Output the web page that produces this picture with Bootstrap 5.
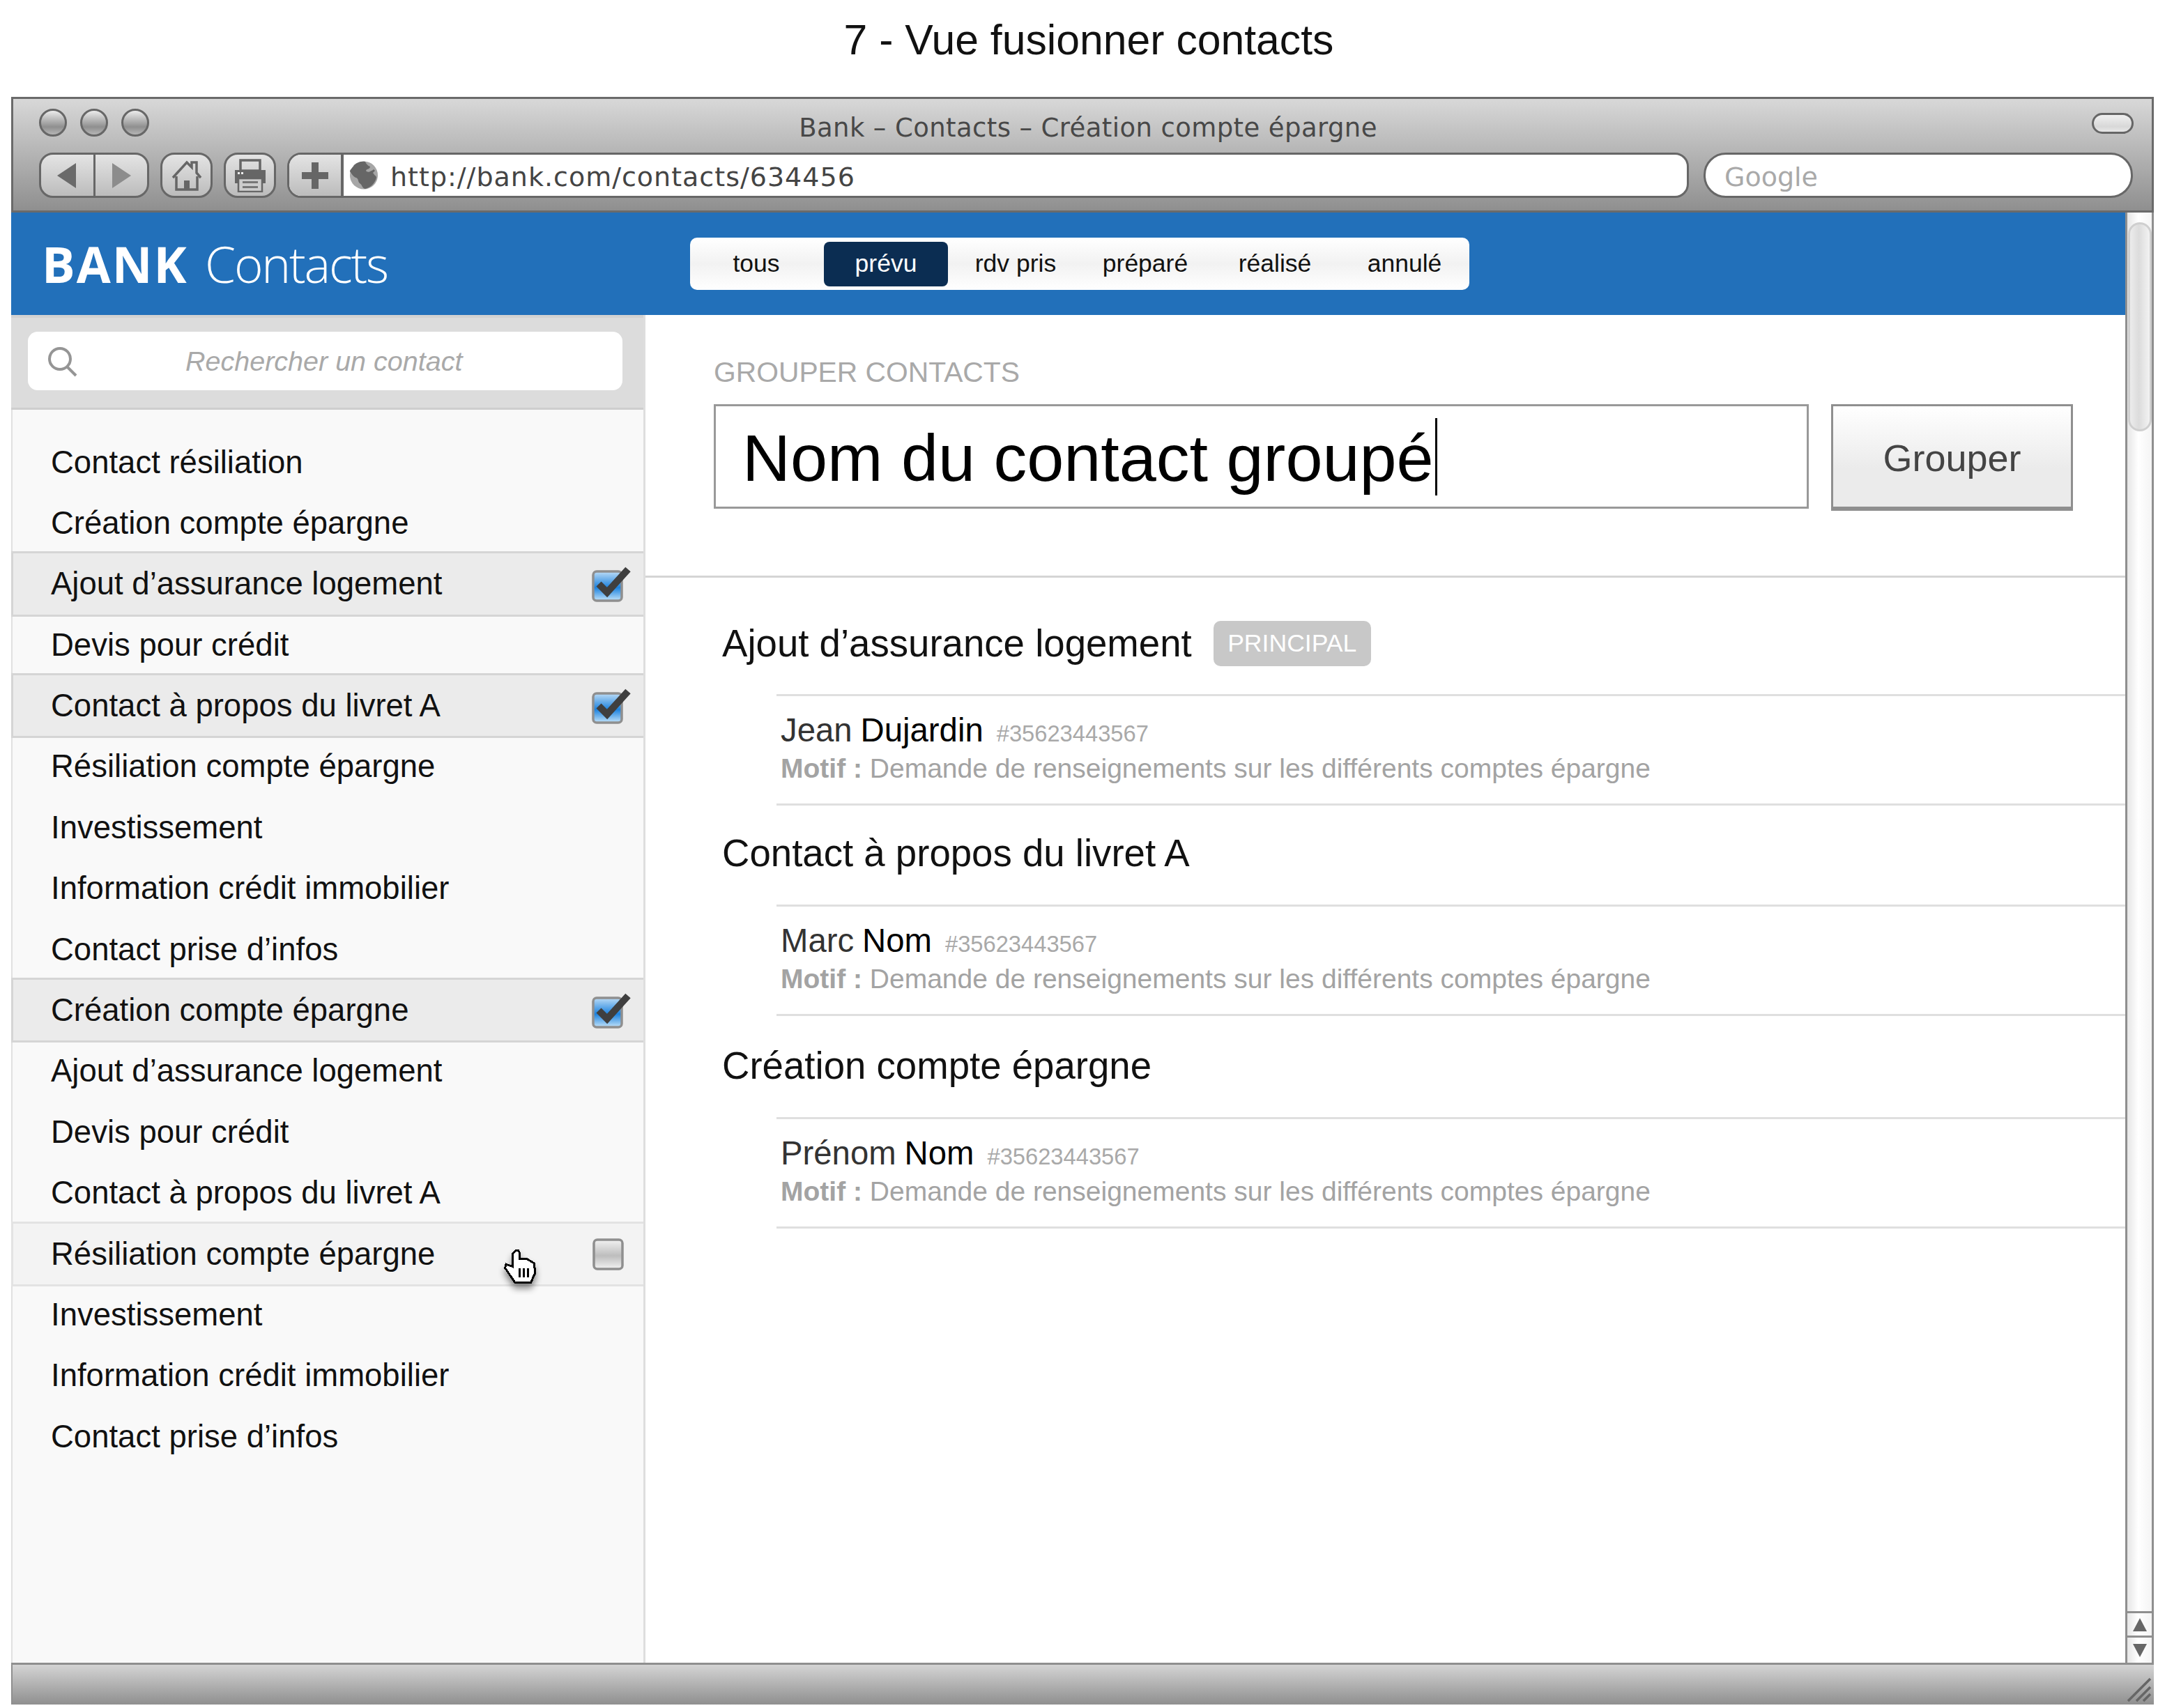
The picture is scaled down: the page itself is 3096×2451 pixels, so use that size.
<!DOCTYPE html>
<html lang="fr">
<head>
<meta charset="utf-8">
<title>Vue fusionner contacts</title>
<link href="https://cdn.jsdelivr.net/npm/bootstrap@5.3.0/dist/css/bootstrap.min.css" rel="stylesheet">
<style>
html,body{background:#fff;margin:0;height:2451px;overflow:hidden}
body{font-family:"Liberation Sans",Arial,sans-serif;color:#111}
.page-head{height:139px;font-size:60.700px;line-height:1;padding:27px 0 0 28px;text-align:center;color:#111;margin:0;font-weight:400}
.win{margin-left:16px;width:3074px;height:2307px}
.chrome{height:166px;border:3px solid #6a6a6a;background:linear-gradient(#d8d8d8,#8f8f8f);padding:14px 26px 0 37px;font-family:"DejaVu Sans",sans-serif}
.chrome-top{height:48px;position:relative}
.light{width:40px;height:40px;border-radius:50%;border:3px solid #676767;background:linear-gradient(#ececec,#8f8f8f 68%,#b5b5b5)}
.chrome-title{flex:1;text-align:center;font-size:37px;line-height:48px;color:#484848;letter-spacing:.4px;padding-top:4px;padding-right:93px}
.oval{width:60px;height:30px;border-radius:15px;border:3px solid #666;background:linear-gradient(#f0f0f0,#d8d8d8 70%,#e8e8e8);margin-top:6px}
.tools{margin-top:15px;height:65px}
.tbtn{height:65px;border:3px solid #676767;border-radius:20px;background:linear-gradient(#e4e4e4,#bcbcbc);display:flex;align-items:center;justify-content:center}
.tbtn svg{display:block}
.nav-back{width:158px;padding:0}
.nav-back>span{flex:1;height:100%;display:flex;align-items:center;justify-content:center}
.nav-back>span+span{border-left:3px solid #676767}
.one-btn{width:75px}
.addr{width:2011px;height:65px;border:3px solid #676767;border-radius:20px;display:flex;overflow:hidden;background:#fff}
.addr-plus{width:78px;border-right:4px solid #676767;background:linear-gradient(#e4e4e4,#bcbcbc);display:flex;align-items:center;justify-content:center}
.addr-url{flex:1;display:flex;align-items:center;padding-left:9px;font-size:38px;color:#444;letter-spacing:1px;gap:18px}
.addr-url span{padding-top:6px}
.google{width:616px;height:65px;margin-left:21px;border:3px solid #676767;border-radius:32px;background:#fff;font-size:38px;color:#a9a9a9;padding-left:27px;line-height:65px}
.mid{height:2081px}
.left-col{width:3033px;min-width:3033px}
.blue{height:147px;background:#2270ba;padding-left:44px}
.brand{width:930px;color:#fff;font-family:"Open Sans",sans-serif;font-size:71px;line-height:1;margin-top:0;white-space:nowrap}
.brand b{font-weight:700;letter-spacing:2px}
.brand span{font-weight:300;letter-spacing:-2.200px;margin-left:6px}
.tabs{width:1118px;height:75px;padding-left:2px;background:linear-gradient(#fff,#f2f2f2 50%,#fff);border-radius:10px;margin-top:36px;flex-wrap:nowrap}
.tabs .nav-item{width:186px;height:75px;display:flex;align-items:center;justify-content:center}
.tabs .nav-link{width:178px;height:64px;padding:0;text-align:center;line-height:62px;font-size:35.500px;color:#111;border-radius:8px}
.tabs .nav-link.active{background:#0b2d52;color:#fff}
.lower{height:1934px}
.side{width:910px;min-width:910px;background:#f9f9f9;border-left:2px solid #e0e0e0;border-right:3px solid #dedede}
.finder{height:136px;margin-left:-2px;background:#dcdcdc;border-top:4px solid #d2d2d2;border-bottom:3px solid #cecece;padding:20px 30px 0 24px;position:relative}
.finder input{height:84px;border:0;border-radius:14px;font-size:39.500px;font-style:italic;padding:0 0 0 226px;box-shadow:none;color:#aaa}
.finder input::placeholder{color:#a9a9a9;opacity:1}
.finder svg{position:absolute;left:48px;top:41px}
.contacts{padding-top:31.500px;background:transparent;border-radius:0}
.contacts .list-group-item{background:transparent;border:0;border-radius:0;height:87.400px;padding:0 17px 0 55px;font-size:45.500px;line-height:87.400px;color:#111;display:flex;justify-content:space-between;align-items:center;white-space:nowrap;margin:0}
.contacts .list-group-item.picked{background:#ebebeb;height:93.400px;margin:-3px 0;border-top:3px solid #d5d5d5;border-bottom:3px solid #d5d5d5;border-left:3px solid #d5d5d5;margin-left:-2px;padding-left:54px;position:relative;z-index:1}
.contacts .list-group-item.hovering{background:#f3f3f3;border-color:#e3e3e3;position:relative}
.hand{position:absolute;left:704px;top:37px;filter:drop-shadow(0 7px 5px rgba(0,0,0,.45));z-index:3}
.work{flex:1;background:#fff}
.top-form{height:377px;padding:60px 75px 0 98px;border-bottom:3px solid #d5d5d5}
.form-cap{font-size:40.800px;line-height:44px;color:#a9a9a9;margin:0 0 24px;font-weight:400;text-transform:uppercase}
.name-box{width:1571px;height:150px;border:3px solid #999;border-radius:0;font-size:95.400px;line-height:140px;padding:4px 0 0 38px;color:#000;background:#fff;display:flex;align-items:center}
.caret-bar{display:inline-block;width:3px;height:111px;background:#000;margin:-4px 0 0 2px}
.merge{width:347px;height:153px;margin-left:32px;border:3px solid #8f8f8f;border-bottom-width:6px;border-radius:0;background:linear-gradient(#fff,#ebebeb 62%);font-size:54px;color:#444;padding:4px 0 0}
.merge:hover{background:linear-gradient(#fff,#ebebeb 62%);color:#444;border-color:#8f8f8f}
.grp{padding-left:110px}
.grp-head{font-size:54.600px;line-height:64px;margin:0;font-weight:400;color:#111;padding:37px 0 41px;display:flex;align-items:center}
.grp-head.first{padding-top:62px;padding-bottom:40px}
.grp-head.last{padding-top:40px;padding-bottom:41px}
.tag{background:#c8c8c8;color:#fff;font-size:35.600px;font-weight:400;border-radius:10px;height:65px;width:226px;margin-left:31px;padding:0;line-height:65px}
.person{margin-left:78px;border-top:3px solid #dfdfdf;border-bottom:3px solid #dfdfdf;height:160px;padding:21px 0 0 6px}
.who{font-size:47.300px;line-height:56px;color:#333;display:flex;align-items:baseline}
.who b{font-weight:400;color:#000;margin-left:12px}
.who small{font-size:32.700px;color:#a9a9a9;margin-left:19px}
.why{font-size:39px;line-height:48px;color:#a3a3a3;margin:-2px 0 0}
.why b{font-weight:700;color:#a3a3a3}
.rail{width:41px;border-left:3px solid #8f8f8f;border-right:3px solid #8f8f8f;background:linear-gradient(90deg,#e6e6e6,#fff 45%,#f4f4f4)}
.thumb{height:300px;margin:14px 0 0 1px;width:34px;border-radius:17px;border:3px solid #cfcfcf;background:linear-gradient(90deg,#ececec,#dcdcdc 45%,#f3f3f3)}
.arrow-box{margin-left:-3px;margin-right:-3px;border-top:3px solid #8f8f8f;border-left:3px solid #8f8f8f;border-right:3px solid #8f8f8f;display:flex;align-items:center;justify-content:center}
.up-box{height:35px}
.down-box{height:39px}
.status{height:60px;border-top:3px solid #8f8f8f;border-left:2px solid #8f8f8f;background:linear-gradient(#d4d4d4,#8f8f8f);position:relative}
.status svg{position:absolute;right:3px;top:18px}
.lights{gap:19px}
</style>
</head>
<body>
<h1 class="page-head">7 - Vue fusionner contacts</h1>
<div class="win d-flex flex-column">
  <div class="chrome">
    <div class="chrome-top d-flex">
      <div class="d-flex lights">
        <div class="light"></div><div class="light"></div><div class="light"></div>
      </div>
      <div class="chrome-title">Bank – Contacts – Création compte épargne</div>
      <div class="oval"></div>
    </div>
    <div class="tools d-flex">
      <div class="tbtn nav-back">
        <span><svg width="30" height="36" viewBox="0 0 30 36"><path d="M28 0V36L1 18Z" fill="#6a6a6a"/></svg></span>
        <span><svg width="30" height="36" viewBox="0 0 30 36"><path d="M2 0V36L29 18Z" fill="#8c8c8c"/></svg></span>
      </div>
      <div class="tbtn one-btn ms-3">
        <svg width="46" height="46" viewBox="0 0 46 46"><path d="M3 26 23 4l7 7V4h7v15l6 7" fill="none" stroke="#666" stroke-width="3.5"/><path d="M8 24V43H38V24" fill="none" stroke="#666" stroke-width="3.5"/><rect x="19" y="30" width="8" height="13" fill="#666"/></svg>
      </div>
      <div class="tbtn one-btn ms-3">
        <svg width="48" height="48" viewBox="0 0 48 48"><rect x="10" y="2" width="28" height="15" fill="none" stroke="#666" stroke-width="3.5"/><rect x="2" y="16" width="44" height="19" fill="#666"/><rect x="6" y="19" width="3" height="3" fill="#eee"/><rect x="11" y="19" width="3" height="3" fill="#eee"/><rect x="7" y="28" width="34" height="19" fill="#ccc" stroke="#666" stroke-width="2.5"/><rect x="13" y="32" width="22" height="3" fill="#777"/><rect x="13" y="39" width="22" height="3" fill="#777"/></svg>
      </div>
      <div class="addr ms-3">
        <div class="addr-plus"><svg width="38" height="38" viewBox="0 0 38 38"><path d="M14 0h10v14h14v10H24v14H14V24H0V14h14z" fill="#666"/></svg></div>
        <div class="addr-url">
          <svg width="40" height="41" viewBox="0 0 40 41"><circle cx="20" cy="20.500" r="20" fill="#a6a6a6"/><path d="M6 6C10 2 16 0 22 1c1 3 4 6 7 7 0 4-5 3-6 6 2 3 8 1 11 4 1 3 4 3 4 6-2 8-8 14-16 16-5-1-4-6-8-8-3-3-1-6-5-8-4-1-6-5-9-9 0-3 4-5 6-9z" fill="#666"/><path d="M26 17c3-3 5-2 8-5l2 2-4 4z" fill="#666"/></svg>
          <span>http://bank.com/contacts/634456</span>
        </div>
      </div>
      <div class="google">Google</div>
    </div>
  </div>

  <div class="mid d-flex">
    <div class="left-col">
      <div class="blue d-flex">
        <div class="brand d-flex align-items-center"><b>BANK</b>&nbsp;<span>Contacts</span></div>
        <ul class="tabs nav nav-pills">
          <li class="nav-item"><a class="nav-link" href="#">tous</a></li>
          <li class="nav-item"><a class="nav-link active" href="#">prévu</a></li>
          <li class="nav-item"><a class="nav-link" href="#">rdv pris</a></li>
          <li class="nav-item"><a class="nav-link" href="#">préparé</a></li>
          <li class="nav-item"><a class="nav-link" href="#">réalisé</a></li>
          <li class="nav-item"><a class="nav-link" href="#">annulé</a></li>
        </ul>
      </div>
      <div class="lower d-flex">
        <aside class="side">
          <div class="finder">
            <svg width="56" height="56" viewBox="0 0 56 56"><circle cx="22" cy="18" r="15" fill="none" stroke="#959595" stroke-width="4"/><path d="M33 30 45 42" stroke="#959595" stroke-width="4" fill="none"/></svg>
            <input class="form-control" type="text" placeholder="Rechercher un contact">
          </div>
          <ul class="contacts list-group">
            <li class="list-group-item">Contact résiliation</li>
            <li class="list-group-item">Création compte épargne</li>
            <li class="list-group-item picked">Ajout d’assurance logement
              <svg width="60" height="60" viewBox="0 0 60 60"><defs><linearGradient id="tick" x1="0" y1="0" x2="0" y2="1"><stop offset="0" stop-color="#bcdcf6"/><stop offset=".55" stop-color="#1c82de"/><stop offset="1" stop-color="#c1e2f9"/></linearGradient></defs><rect x="5" y="12" width="41" height="42" rx="5" fill="url(#tick)" stroke="#8f8f8f" stroke-width="3.500"/><path d="M13 30 25 42 55 9" fill="none" stroke="#3f3f3f" stroke-width="10"/></svg></li>
            <li class="list-group-item">Devis pour crédit</li>
            <li class="list-group-item picked">Contact à propos du livret A
              <svg width="60" height="60" viewBox="0 0 60 60"><rect x="5" y="12" width="41" height="42" rx="5" fill="url(#tick)" stroke="#8f8f8f" stroke-width="3.500"/><path d="M13 30 25 42 55 9" fill="none" stroke="#3f3f3f" stroke-width="10"/></svg></li>
            <li class="list-group-item">Résiliation compte épargne</li>
            <li class="list-group-item">Investissement</li>
            <li class="list-group-item">Information crédit immobilier</li>
            <li class="list-group-item">Contact prise d’infos</li>
            <li class="list-group-item picked">Création compte épargne
              <svg width="60" height="60" viewBox="0 0 60 60"><rect x="5" y="12" width="41" height="42" rx="5" fill="url(#tick)" stroke="#8f8f8f" stroke-width="3.500"/><path d="M13 30 25 42 55 9" fill="none" stroke="#3f3f3f" stroke-width="10"/></svg></li>
            <li class="list-group-item">Ajout d’assurance logement</li>
            <li class="list-group-item">Devis pour crédit</li>
            <li class="list-group-item">Contact à propos du livret A</li>
            <li class="list-group-item picked hovering">Résiliation compte épargne
              <svg class="hand" width="47" height="58" viewBox="370 220 140 175" shape-rendering="crispEdges"><path d="M408 238 420 225h12l6 12v25h32l30 18 4 42-18 40h-70l-42-62 4-16 28 10z" fill="#fff" stroke="#000" stroke-width="9"/><path d="M437 302v38M455 302v38M473 302v38" stroke="#000" stroke-width="8"/></svg>
              <svg width="60" height="60" viewBox="0 0 60 60"><defs><linearGradient id="blank" x1="0" y1="0" x2="0" y2="1"><stop offset="0" stop-color="#f2f2f2"/><stop offset=".55" stop-color="#bdbdbd"/><stop offset="1" stop-color="#f2f2f2"/></linearGradient></defs><rect x="6" y="10" width="41" height="42" rx="5" fill="url(#blank)" stroke="#8f8f8f" stroke-width="3.500"/></svg></li>
            <li class="list-group-item">Investissement</li>
            <li class="list-group-item">Information crédit immobilier</li>
            <li class="list-group-item">Contact prise d’infos</li>
          </ul>
        </aside>
        <main class="work">
          <div class="top-form">
            <h2 class="form-cap">Grouper contacts</h2>
            <div class="d-flex align-items-start">
              <div class="name-box form-control">Nom du contact groupé<span class="caret-bar"></span></div>
              <button class="merge btn" type="button">Grouper</button>
            </div>
          </div>
          <section class="grp">
            <h3 class="grp-head first">Ajout d’assurance logement <span class="tag badge">PRINCIPAL</span></h3>
            <div class="person">
              <div class="who">Jean <b>Dujardin</b> <small>#35623443567</small></div>
              <p class="why"><b>Motif :</b> Demande de renseignements sur les différents comptes épargne</p>
            </div>
          </section>
          <section class="grp">
            <h3 class="grp-head">Contact à propos du livret A</h3>
            <div class="person">
              <div class="who">Marc <b>Nom</b> <small>#35623443567</small></div>
              <p class="why"><b>Motif :</b> Demande de renseignements sur les différents comptes épargne</p>
            </div>
          </section>
          <section class="grp">
            <h3 class="grp-head last">Création compte épargne</h3>
            <div class="person">
              <div class="who">Prénom <b>Nom</b> <small>#35623443567</small></div>
              <p class="why"><b>Motif :</b> Demande de renseignements sur les différents comptes épargne</p>
            </div>
          </section>
        </main>
      </div>
    </div>
    <div class="rail d-flex flex-column">
      <div class="thumb"></div>
      <div class="flex-grow-1"></div>
      <div class="arrow-box up-box"><svg width="20" height="19" viewBox="0 0 20 19"><path d="M10 0 20 19H0Z" fill="#666"/></svg></div>
      <div class="arrow-box down-box"><svg width="20" height="19" viewBox="0 0 20 19"><path d="M0 0H20L10 19Z" fill="#666"/></svg></div>
    </div>
  </div>

  <div class="status">
    <svg width="36" height="36" viewBox="0 0 36 36"><path d="M2 34 34 2M14 34 34 14M24 34 34 24" stroke="#666" stroke-width="3.500" fill="none"/></svg>
  </div>
</div>
</body>
</html>
